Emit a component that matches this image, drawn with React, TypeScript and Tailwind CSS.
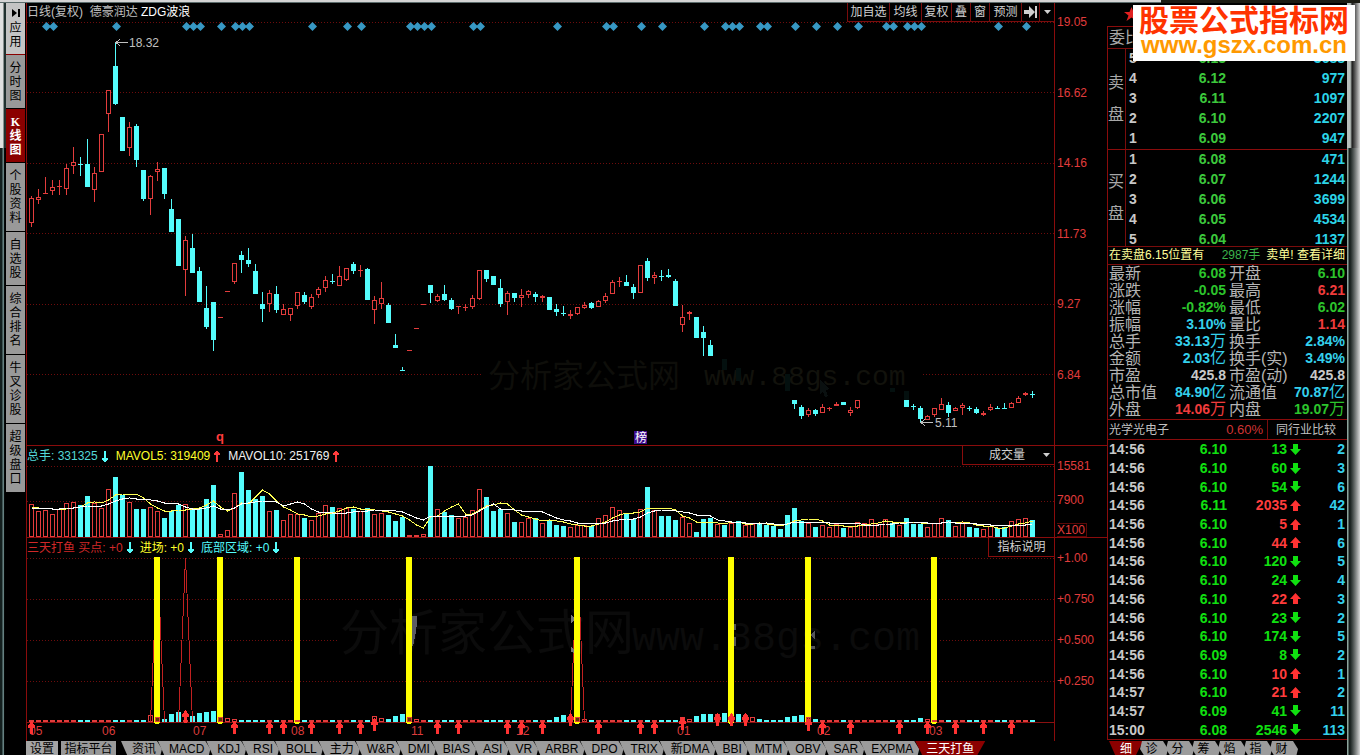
import React from "react"

// kind (r = up, c = down, f = filled red), high, body top, body bottom, low, volume top
type Bar = [string, number, number, number, number, number]

const BARS: Bar[] = [
  ["r", 196, 198, 223, 227, 504], ["r", 189, 197, 200, 204, 511], ["r", 177, 193, 193, 193, 510],
  ["r", 180, 187, 191, 195, 514], ["r", 180, 186, 186, 195, 509], ["r", 164, 168, 189, 195, 503],
  ["r", 147, 162, 166, 174, 502], ["c", 157, 164, 164, 176, 505], ["c", 139, 164, 187, 187, 496],
  ["r", 167, 173, 190, 202, 503], ["r", 134, 134, 172, 172, 508], ["r", 90, 90, 114, 132, 489],
  ["c", 42, 66, 104, 105, 477], ["c", 117, 117, 151, 151, 495], ["r", 122, 127, 148, 156, 502],
  ["c", 124, 126, 160, 167, 509], ["c", 170, 170, 199, 201, 509], ["r", 175, 176, 199, 215, 507],
  ["r", 162, 169, 172, 181, 511], ["c", 168, 168, 194, 199, 518], ["c", 199, 209, 232, 232, 511],
  ["c", 219, 219, 266, 266, 505], ["r", 236, 240, 270, 296, 504], ["c", 234, 248, 273, 273, 509],
  ["c", 267, 271, 302, 302, 509], ["c", 286, 308, 327, 329, 499], ["c", 302, 302, 340, 351, 485],
  ["r", 317, 317, 317, 317, 534], ["r", 291, 291, 291, 291, 530], ["r", 263, 263, 282, 284, 493],
  ["c", 251, 255, 260, 273, 472], ["c", 248, 260, 264, 267, 490], ["c", 264, 271, 294, 294, 499],
  ["c", 292, 304, 309, 322, 496], ["r", 290, 293, 304, 312, 511], ["c", 286, 294, 310, 313, 510],
  ["r", 304, 309, 315, 315, 520], ["r", 308, 308, 315, 321, 514], ["r", 292, 292, 306, 309, 514],
  ["c", 292, 295, 302, 304, 518], ["r", 294, 297, 307, 309, 520], ["r", 287, 289, 295, 298, 513],
  ["r", 276, 280, 288, 292, 505], ["c", 274, 281, 281, 284, 507], ["r", 266, 276, 286, 286, 508],
  ["r", 268, 268, 280, 281, 508], ["c", 262, 264, 271, 274, 509], ["r", 265, 270, 270, 277, 511],
  ["c", 268, 269, 300, 300, 508], ["r", 296, 300, 310, 324, 514], ["r", 282, 298, 304, 309, 513],
  ["c", 303, 305, 323, 323, 515], ["c", 334, 345, 348, 348, 521], ["c", 367, 370, 370, 370, 517],
  ["r", 350, 350, 350, 350, 535], ["r", 328, 328, 328, 328, 535], ["r", 304, 304, 304, 304, 534],
  ["c", 285, 285, 293, 303, 466], ["r", 294, 296, 301, 302, 509], ["c", 285, 294, 300, 301, 512],
  ["c", 298, 300, 309, 310, 515], ["r", 306, 306, 306, 314, 518], ["r", 304, 307, 307, 311, 517],
  ["r", 295, 298, 307, 309, 510], ["r", 270, 270, 299, 300, 489], ["c", 270, 270, 279, 282, 497],
  ["c", 276, 276, 285, 285, 511], ["c", 279, 288, 304, 307, 509], ["r", 291, 293, 302, 315, 513],
  ["c", 293, 293, 298, 302, 522], ["r", 289, 295, 298, 307, 522], ["r", 290, 291, 295, 298, 518],
  ["c", 292, 294, 297, 302, 518], ["f", 295, 296, 298, 302, 523], ["c", 297, 297, 310, 310, 520],
  ["c", 304, 309, 312, 316, 525], ["c", 306, 313, 313, 316, 526], ["f", 310, 314, 316, 319, 527],
  ["r", 307, 307, 314, 315, 525], ["r", 302, 305, 308, 309, 525], ["c", 302, 303, 308, 309, 526],
  ["r", 300, 301, 307, 307, 518], ["r", 293, 296, 301, 303, 515], ["r", 280, 282, 294, 294, 507],
  ["r", 277, 281, 281, 287, 510], ["c", 275, 282, 286, 286, 513], ["c", 284, 287, 293, 299, 519],
  ["r", 265, 265, 293, 293, 509], ["c", 258, 261, 278, 281, 487], ["r", 272, 275, 278, 284, 510],
  ["c", 270, 276, 276, 281, 516], ["c", 269, 275, 277, 278, 516], ["c", 279, 281, 306, 306, 520],
  ["r", 305, 317, 325, 332, 517], ["f", 311, 312, 314, 320, 523], ["c", 317, 317, 338, 338, 532],
  ["c", 326, 332, 338, 356, 519], ["c", 340, 345, 356, 356, 518], ["r", 0, 0, 0, 0, 524],
  ["c", 0, 0, 0, 0, 525], ["r", 0, 0, 0, 0, 523], ["c", 0, 0, 0, 0, 521],
  ["r", 0, 0, 0, 0, 525], ["r", 0, 0, 0, 0, 524], ["c", 0, 0, 0, 0, 524],
  ["c", 0, 0, 0, 0, 525], ["c", 0, 0, 0, 0, 526], ["c", 0, 0, 0, 0, 529],
  ["c", 0, 0, 0, 0, 515], ["c", 400, 400, 404, 409, 508], ["c", 405, 407, 416, 419, 521],
  ["r", 408, 410, 415, 417, 523], ["c", 409, 410, 414, 416, 527], ["r", 404, 407, 413, 413, 525],
  ["r", 407, 408, 408, 411, 527], ["f", 402, 404, 406, 406, 524], ["c", 402, 402, 405, 405, 528],
  ["r", 407, 410, 413, 416, 527], ["r", 400, 400, 408, 409, 522], ["r", 0, 0, 0, 0, 523],
  ["r", 0, 0, 0, 0, 519], ["r", 0, 0, 0, 0, 524], ["r", 0, 0, 0, 0, 519],
  ["c", 0, 0, 0, 0, 523], ["r", 0, 0, 0, 0, 525], ["c", 400, 400, 407, 407, 518],
  ["c", 404, 406, 406, 410, 524], ["c", 406, 408, 419, 422, 524], ["r", 415, 416, 420, 420, 527],
  ["r", 408, 408, 415, 417, 523], ["r", 398, 404, 410, 410, 518], ["c", 402, 405, 413, 417, 520],
  ["r", 407, 408, 411, 411, 526], ["r", 403, 405, 408, 415, 522], ["c", 406, 408, 408, 411, 527],
  ["c", 407, 409, 413, 414, 528], ["f", 411, 413, 415, 416, 529], ["r", 404, 407, 410, 411, 526],
  ["c", 406, 408, 408, 408, 528], ["c", 403, 408, 408, 408, 527], ["r", 402, 403, 408, 408, 521],
  ["r", 396, 398, 403, 403, 519], ["f", 392, 393, 395, 396, 518], ["c", 391, 394, 394, 398, 520],
]

const CYAN = "#54fcfc"
const RED = "#e23c3c"
const BASE = 537
const STEP = 7
const LEFT = 29

const barX = (i: number) => LEFT + i * STEP
const midX = (i: number) => barX(i) + 2.5

const FAINT: Bar[] = [
  ["c", 0, 359, 370, 0, 99], ["c", 0, 368, 381, 0, 101], ["c", 0, 374, 391, 0, 108],
  ["c", 0, 388, 392, 0, 123], ["c", 0, 391, 400, 0, 125],
]

const DIAMONDS = [
  2, 3, 12, 22, 23, 24, 27, 29, 30, 31, 40, 45, 47, 54, 55, 56, 57, 63, 64, 75, 82, 83, 87,
  90, 96, 99, 100, 101, 104, 105, 109, 112, 115, 118, 122, 123, 125, 126, 127, 138, 142,
]

const YELLOW = [18, 27, 38, 54, 78, 100, 111, 129]
const SPIKES = [18, 22, 78]

// bar index -> arrow tip
const ARROWS: [number, number][] = [
  [0, 721], [22, 710], [29, 721], [34, 721], [36, 721], [40, 721], [44, 721], [47, 721],
  [49, 718], [58, 721], [61, 721], [68, 721], [70, 721], [73, 721], [77, 713], [81, 721],
  [87, 721], [89, 721], [93, 717], [98, 713], [100, 713], [102, 713], [111, 718], [113, 721],
  [117, 721], [124, 721], [128, 721], [132, 721], [136, 721], [140, 721],
]

const ZONE: Record<number, number> = {
  17: 715, 18: 718, 19: 719, 20: 714, 21: 712, 23: 716, 24: 713, 25: 712, 26: 711, 27: 716,
  28: 718, 29: 719, 49: 716, 50: 718, 51: 719, 52: 716, 53: 714, 54: 717, 55: 719, 75: 717,
  76: 715, 78: 717, 79: 719, 93: 717, 94: 719, 95: 716, 96: 714, 97: 714, 98: 714, 99: 713,
  100: 714, 101: 714, 102: 715, 103: 717, 104: 719, 108: 717, 109: 716, 110: 715, 111: 718,
  112: 719, 127: 718, 128: 719,
}

const MONTHS: [string, number][] = [
  ["05", 29], ["06", 102], ["07", 193], ["08", 291], ["11", 411], ["12", 516], ["01", 677],
  ["02", 817], ["03", 929],
]

const average = (days: number) =>
  BARS.map((_, i) => {
    let sum = 0
    for (let k = 0; k < days; k++) {
      const bar = BARS[i - k]
      sum += bar ? BASE - bar[5] : 29
    }
    return `${midX(i)},${Math.round(BASE - sum / days)}`
  }).join(" ")

const Grid = ({ rows, from = 27, to = 1054 }: { rows: number[]; from?: number; to?: number }) => (
  <>
    {rows.map((y) => (
      <line key={y} x1={from} x2={to} y1={y + 0.5} y2={y + 0.5} stroke="#6e0c0c" strokeDasharray="1 2" />
    ))}
  </>
)

const Candle = ({ bar, i }: { bar: Bar; i: number }) => {
  const [kind, high, top, bottom, low] = bar
  if (!high) return null
  const color = kind === "c" ? CYAN : RED
  const x = barX(i)
  const flat = top === bottom
  return (
    <g>
      {high < top && <rect x={x + 2} y={high} width={1} height={top - high} fill={color} />}
      {low > bottom && <rect x={x + 2} y={bottom} width={1} height={low - bottom} fill={color} />}
      {flat || kind !== "r" ? (
        <rect x={x} y={top} width={5} height={flat ? 1 : bottom - top} fill={color} />
      ) : (
        <rect x={x + 0.5} y={top + 0.5} width={4} height={bottom - top - 1} fill="#000" stroke={color} />
      )}
    </g>
  )
}

const PriceChart = () => (
  <svg viewBox="27 22 1027 423" preserveAspectRatio="none" className="block w-full flex-1 min-h-0" shapeRendering="crispEdges">
    <Grid rows={[22, 92, 163, 233, 304]} />
    <Grid rows={[374]} to={483} />
    <Grid rows={[374]} from={923} />
    <text x="488" y="387" fontSize="32" fill="#0e0e0a" className="font-['Noto_Sans_CJK_SC',sans-serif]">分析家公式网</text>
    <text x="704" y="385" fontSize="28" fill="#12120c" className="font-['Liberation_Mono',monospace]">www.88gs.com</text>
    {FAINT.map((bar) => (
      <rect key={bar[5]} x={barX(bar[5])} y={bar[2]} width={5} height={bar[3] - bar[2]} fill="#04100f" />
    ))}
    <path d="M820 380l10 9-4 1 2 6-3 1-2-6-3 3z" fill="#0a1010" />
    {DIAMONDS.map((i) => (
      <path key={i} d={`M${midX(i) + 1} 22l4.500 4.500l-4.500 4.500l-4.500-4.500z`} fill="#3798c4" shapeRendering="auto" />
    ))}
    {BARS.map((bar, i) => (
      <Candle key={i} bar={bar} i={i} />
    ))}
    <path d="M116 42.500h12M120 39.500l-4 3l4 3" stroke="#c0c0c0" fill="none" />
    <text x="129" y="47" fontSize="12" fill="#c0c0c0">18.32</text>
    <path d="M921 422.500h12M925 419.500l-4 3l4 3" stroke="#c0c0c0" fill="none" />
    <text x="935" y="427" fontSize="12" fill="#c0c0c0">5.11</text>
    <text x="216" y="441" fontSize="13" fontWeight="bold" fill="#ff3c3c">q</text>
    <rect x="634" y="431" width="13" height="13" fill="#3c0c8c" />
    <text x="635" y="442" fontSize="12" fill="#fff">榜</text>
  </svg>
)

const VolumeChart = () => (
  <svg viewBox="27 466 1027 71" preserveAspectRatio="none" className="block w-full flex-1 min-h-0" shapeRendering="crispEdges">
    <Grid rows={[466, 501]} />
    {BARS.map(([kind, , , , , top], i) =>
      kind === "c" ? (
        <rect key={i} x={barX(i)} y={top} width={5} height={BASE - top} fill={CYAN} />
      ) : (
        <rect key={i} x={barX(i) + 0.5} y={top + 0.5} width={4} height={BASE - top - 1} fill="#000" stroke={RED} />
      )
    )}
    <polyline points={average(5)} fill="none" stroke="#ffff54" />
    <polyline points={average(10)} fill="none" stroke="#fff" />
  </svg>
)

const SignalChart = () => (
  <svg viewBox="27 557 1027 184" preserveAspectRatio="none" className="block w-full flex-1 min-h-0" shapeRendering="crispEdges">
    <Grid rows={[558, 599, 681]} />
    <Grid rows={[640]} to={337} />
    <Grid rows={[640]} from={940} />
    <text x="340" y="650" fontSize="49" fill="#0b0b0b" className="font-['Noto_Sans_CJK_SC',sans-serif]">分析家公式网</text>
    <text x="632" y="650" fontSize="40" fill="#0b0b0b" className="font-['Liberation_Mono',monospace]">www.88gs.com</text>
    <line x1="27" x2="1054" y1="722.500" y2="722.500" stroke="#8a1010" />
    {BARS.map(([kind], i) => {
      const top = ZONE[i] ?? 720
      const color = kind === "c" ? CYAN : RED
      return top >= 720 || kind === "c" ? (
        <rect key={i} x={barX(i)} y={top} width={5} height={722 - top} fill={color} />
      ) : (
        <rect key={i} x={barX(i) + 0.5} y={top + 0.5} width={4} height={721 - top} fill="#000" stroke={color} />
      )
    })}
    {SPIKES.map((i) => (
      <polyline key={i} points={`${midX(i) - 7},722 ${midX(i)},558 ${midX(i) + 7},722`} fill="none" stroke="#c02020" />
    ))}
    <path d="M412 616h5v6l-1 10l-3 14h-1z" fill="#5c5c64" />
    <path d="M571 615l3 3v3l-3 2zM571 647l4 3v3l-4-1z" fill="#76767c" />
    <path d="M734 624h2v6h-2zM734 637h2v9h-2zM811 634l4-4v10l-3-3zM811 646h4v3h-4z" fill="#55555a" />
    {YELLOW.map((i) => (
      <path key={i} d={`M${midX(i) - 3.5} 557h6v165l-1 2h-4l-1-2z`} fill="#ffff00" />
    ))}
    {YELLOW.map((i) => (
      <rect key={i} x={barX(i) + 0.5} y={i === 38 || i === 129 ? 720.5 : 717.5} width={4} height={i === 38 || i === 129 ? 1 : 4} fill="#5a3a00" stroke={RED} />
    ))}
    {MONTHS.map(([label, x]) => (
      <text key={label} x={x} y="735" fontSize="12" fill="#dc3c3c">{label}</text>
    ))}
    {ARROWS.map(([i, tip]) => (
      <path key={i} d={`M${midX(i)} ${tip}l3.500 5v2h-2v6h-3v-6h-2v-2z`} fill="#ff3232" />
    ))}
  </svg>
)

const Arrow = ({ up, className }: { up?: boolean; className: string }) => (
  <svg width="6" height="11" viewBox="0 0 6 11" className={`ml-1 shrink-0 ${up ? "rotate-180" : ""} ${className}`} shapeRendering="crispEdges">
    <path d="M2 0h2v7h2v1l-2 3h-2l-2-3v-1h2z" fill="currentColor" />
  </svg>
)

const SIDE_TABS = [
  { label: "分时图", className: "h-[54px] bg-[#999] text-black" },
  { label: "K线图", className: "h-[54px] bg-[#8b0000] text-white font-bold" },
  { label: "个股资料", className: "h-[69px] bg-[#999] text-black" },
  { label: "自选股", className: "h-[54px] bg-[#999] text-black" },
  { label: "综合排名", className: "h-[69px] bg-[#999] text-black" },
  { label: "牛叉诊股", className: "h-[69px] bg-[#999] text-black" },
  { label: "超级盘口", className: "h-[69px] bg-[#999] text-black" },
]

const Sidebar = () => (
  <nav className="w-5 shrink-0 flex flex-col pr-px">
    <button className="h-[52px] flex flex-col items-center justify-center bg-[#c4c4c4] text-black leading-[14px] border-b border-[#8b0000]">
      <svg width="8" height="8" viewBox="0 0 8 8" className="mb-1">
        <path d="M0 0l5 4l-5 4zM6 0h2v8h-2z" />
      </svg>
      <span>应</span>
      <span>用</span>
    </button>
    {SIDE_TABS.map((tab) => (
      <button key={tab.label} className={`flex flex-col items-center justify-center leading-[14px] border-b border-black ${tab.className}`}>
        {tab.label.split("").map((char) => (
          <span key={char} className={char === "K" ? "font-['Liberation_Serif',serif]" : ""}>{char}</span>
        ))}
      </button>
    ))}
  </nav>
)

const TOOLS = [
  { label: "加自选", className: "w-[42px]" },
  { label: "均线", className: "w-8" },
  { label: "复权", className: "w-[30px]" },
  { label: "叠", className: "w-[19px]" },
  { label: "窗", className: "w-[19px]" },
  { label: "预测", className: "w-8" },
]

const Caret = () => (
  <svg width="7" height="4" viewBox="0 0 7 4">
    <path d="M0 0h7l-3.500 4z" fill="#d0d0d0" />
  </svg>
)

const Toolbar = () => (
  <div className="h-[19px] shrink-0 flex items-stretch justify-between">
    <h1 className="text-[#c0c0c0] leading-[19px] whitespace-pre">
      日线(复权)  德豪润达 <span className="text-white">ZDG波浪</span>
    </h1>
    <div className="flex text-[#d0d0d0]">
      {TOOLS.map((tool) => (
        <button key={tool.label} className={`border-l border-b border-[#7a0c0c] leading-[17px] ${tool.className}`}>
          {tool.label}
        </button>
      ))}
      <button aria-label="下一只" className="w-[18px] border-l border-b border-[#7a0c0c] flex items-center justify-center">
        <svg width="13" height="12" viewBox="0 0 13 12">
          <path d="M0 4h5v-4l6 6l-6 6v-4h-5zM11 0h2v12h-2z" fill="#d0d0d0" />
        </svg>
      </button>
      <button aria-label="更多" className="w-[15px] border-l border-b border-[#7a0c0c] flex items-center justify-center">
        <Caret />
      </button>
    </div>
  </div>
)

const AXIS = "w-[53px] shrink-0 flex flex-col border-l border-[#8a0c0c] pl-[2px] text-[#e03c3c] leading-[14px]"

const TABS = [
  "资讯", "MACD", "KDJ", "RSI", "BOLL", "主力", "W&R", "DMI", "BIAS", "ASI", "VR", "ARBR",
  "DPO", "TRIX", "新DMA", "BBI", "MTM", "OBV", "SAR", "EXPMA",
]

const BottomTabs = () => (
  <div className="h-[14px] shrink-0 flex overflow-hidden text-black leading-[15px] whitespace-nowrap">
    <button className="w-8 h-4 bg-[#a4a4a4]">设置</button>
    <button className="w-[55px] h-4 ml-[3px] bg-[#999]">指标平台</button>
    <div className="flex ml-[5px]">
      {TABS.map((tab) => (
        <button
          key={tab}
          className="h-4 pl-[11px] pr-2 -mr-[6px] bg-[#9c9c9c] [clip-path:polygon(0_0,calc(100%-7px)_0,calc(100%-2px)_50%,calc(100%-4px)_100%,7px_100%)]"
        >
          {tab}
        </button>
      ))}
      <button className="w-[70px] h-4 bg-[#8b0000] text-white [clip-path:polygon(0_0,100%_0,calc(100%-9px)_100%,8px_100%)]">
        三天打鱼
      </button>
    </div>
  </div>
)

const Charts = () => (
  <main className="flex-1 min-w-0 flex flex-col">
    <section className="flex-1 min-h-0 flex border-b border-[#8a0c0c]">
      <div className="flex-1 min-w-0 flex flex-col border-l border-[#8a0c0c]">
        <Toolbar />
        <PriceChart />
      </div>
      <div className={`${AXIS} pt-3 pb-[7px]`}>
        {["19.05", "16.62", "14.16", "11.73", "9.27", "6.84"].map((price) => (
          <span key={price} className="flex-1">{price}</span>
        ))}
      </div>
    </section>
    <section className="h-[92px] shrink-0 flex border-b border-[#8a0c0c]">
      <div className="flex-1 min-w-0 flex flex-col border-l border-[#8a0c0c]">
        <header className="h-5 shrink-0 flex justify-between">
          <div className="flex items-center whitespace-nowrap">
            <span className="text-[#54d8d8]">总手: 331325</span>
            <Arrow className="text-[#54fcfc]" />
            <span className="text-[#ffff2a] ml-2">MAVOL5: 319409</span>
            <Arrow up className="text-[#ff3c3c]" />
            <span className="text-[#f0f0f0] ml-2">MAVOL10: 251769</span>
            <Arrow up className="text-[#ff3c3c]" />
          </div>
          <label className="w-[92px] h-[19px] flex items-center border-l border-b border-[#8a0c0c] pr-1">
            <select aria-label="副图指标" className="flex-1 min-w-0 appearance-none bg-transparent pl-[26px] text-[#d0d0d0] leading-4">
              <option>成交量</option>
            </select>
            <Caret />
          </label>
        </header>
        <VolumeChart />
      </div>
      <div className={`${AXIS} pt-[13px]`}>
        <span className="h-[35px]">15581</span>
        <span className="h-[30px]">7900</span>
        <span className="w-[30px] leading-3 border border-l-0 border-[#5a0808]">X100</span>
      </div>
    </section>
    <section className="h-[203px] shrink-0 flex">
      <div className="flex-1 min-w-0 flex flex-col border-l border-[#8a0c0c]">
        <header className="h-[19px] shrink-0 flex justify-between">
          <div className="flex items-center whitespace-nowrap">
            <span className="text-[#d02828]">三天打鱼 买点: +0</span>
            <Arrow className="text-[#54fcfc]" />
            <span className="text-[#ffff2a] ml-[7px]">进场: +0</span>
            <Arrow className="text-[#54fcfc]" />
            <span className="text-[#54fcfc] ml-[7px]">底部区域: +0</span>
            <Arrow className="text-[#54fcfc]" />
          </div>
          <button className="w-[66px] h-[19px] border-l border-b border-[#8a0c0c] text-[#d0d0d0]">指标说明</button>
        </header>
        <SignalChart />
      </div>
      <div className={`${AXIS} pt-[13px]`}>
        {["+1.00", "+0.750", "+0.500", "+0.250"].map((level) => (
          <span key={level} className="h-[41px]">{level}</span>
        ))}
      </div>
    </section>
    <BottomTabs />
  </main>
)

const ASKS = [["5", "6.13", "3688"], ["4", "6.12", "977"], ["3", "6.11", "1097"], ["2", "6.10", "2207"], ["1", "6.09", "947"]]
const BIDS = [["1", "6.08", "471"], ["2", "6.07", "1244"], ["3", "6.06", "3699"], ["4", "6.05", "4534"], ["5", "6.04", "1137"]]

const Book = ({ side, rows, className }: { side: string; rows: string[][]; className: string }) => (
  <div className={`shrink-0 flex ${className}`}>
    <div className="w-[18px] border-r border-[#7a0c0c] flex flex-col justify-center text-base leading-8 text-[#a8a8a8]">
      {side.split("").map((char) => (
        <span key={char}>{char}</span>
      ))}
    </div>
    <table className="flex-1 self-start text-sm leading-[18px] font-bold">
      <tbody>
        {rows.map(([level, price, volume]) => (
          <tr key={level} className="h-5 align-top">
            <td className="w-[30px] pl-[3px] text-[#c8c8c8]">{level}</td>
            <td className="w-[70px] text-right text-[#3cc83c]">{price}</td>
            <td className="text-right text-[#2cd4e8] pr-[2px]">{volume}</td>
          </tr>
        ))}
      </tbody>
    </table>
  </div>
)

const GREEN = "text-[#2cc42c]"
const BLUE = "text-[#34d0ec]"
const HOT = "text-[#f03c3c]"
const PLAIN = "text-[#c8c8c8]"

const STATS = [
  ["最新", "6.08", GREEN, "开盘", "6.10", GREEN],
  ["涨跌", "-0.05", GREEN, "最高", "6.21", HOT],
  ["涨幅", "-0.82%", GREEN, "最低", "6.02", GREEN],
  ["振幅", "3.10%", BLUE, "量比", "1.14", HOT],
  ["总手", "33.13万", BLUE, "换手", "2.84%", BLUE],
  ["金额", "2.03亿", BLUE, "换手(实)", "3.49%", BLUE],
  ["市盈", "425.8", PLAIN, "市盈(动)", "425.8", PLAIN],
  ["总市值", "84.90亿", BLUE, "流通值", "70.87亿", BLUE],
  ["外盘", "14.06万", HOT, "内盘", "19.07万", GREEN],
]

const Value = ({ text }: { text: string }) => {
  const unit = text.match(/[万亿]$/)?.[0]
  return (
    <>
      {unit ? text.slice(0, -1) : text}
      {unit && <span className="font-normal text-base leading-none">{unit}</span>}
    </>
  )
}

const TICKS = [
  ["14:56", "6.10", "13", "down", "2"], ["14:56", "6.10", "60", "down", "3"],
  ["14:56", "6.10", "54", "down", "6"], ["14:56", "6.11", "2035", "up", "42"],
  ["14:56", "6.10", "5", "up", "1"], ["14:56", "6.10", "44", "up", "6"],
  ["14:56", "6.10", "120", "down", "5"], ["14:56", "6.10", "24", "down", "4"],
  ["14:56", "6.10", "22", "up", "3"], ["14:56", "6.10", "23", "down", "2"],
  ["14:56", "6.10", "174", "down", "5"], ["14:56", "6.09", "8", "down", "2"],
  ["14:56", "6.10", "10", "up", "1"], ["14:57", "6.10", "21", "up", "2"],
  ["14:57", "6.09", "41", "down", "11"], ["15:00", "6.08", "2546", "down", "113"],
]

const QuotePanel = () => (
  <aside className="w-[240px] shrink-0 flex flex-col">
    <div className="h-[23px] shrink-0 pl-[17px] pt-1">
      <svg width="15" height="14" viewBox="0 0 15 14">
        <path d="M7.500 0l2 5h5.500l-4.500 3.500l2 5.500l-5-3.500l-5 3.500l2-5.500l-4.500-3.500h5.500z" fill="#e02020" />
      </svg>
    </div>
    <div className="flex-1 min-h-0 flex flex-col border-l border-t border-[#8a0c0c]">
      <div className="h-[22px] shrink-0 border-b border-[#7a0c0c] pl-px text-base leading-[22px] text-[#a8a8a8]">委比</div>
      <Book side="卖盘" rows={ASKS} className="h-[100px]" />
      <Book side="买盘" rows={BIDS} className="h-[97px] border-t border-[#8a0c0c]" />
      <div className="h-[19px] shrink-0 flex justify-between border-y border-[#7a0c0c] pl-px pr-[2px] leading-[17px] text-[#ffff9a] whitespace-nowrap">
        <span>在卖盘6.15位置有</span>
        <span className="flex gap-[6px]">
          <span className="text-[#3cb44c]">2987手</span>
          <span>卖单! 查看详细</span>
        </span>
      </div>
      <dl className="shrink-0 grid grid-cols-[117px_1fr] gap-x-[3px] pl-px pr-[2px] pb-px text-base leading-[17px] text-[#b4b4b4] border-b border-[#8a0c0c]">
        {STATS.map(([a, x, xColor, b, y, yColor]) => (
          <React.Fragment key={a}>
            <div className="flex justify-between h-[17px] whitespace-nowrap">
              <dt>{a}</dt>
              <dd className={`text-sm leading-[17px] font-bold ${xColor}`}><Value text={x} /></dd>
            </div>
            <div className="flex justify-between h-[17px] whitespace-nowrap">
              <dt>{b}</dt>
              <dd className={`text-sm leading-[17px] font-bold ${yColor}`}><Value text={y} /></dd>
            </div>
          </React.Fragment>
        ))}
      </dl>
      <div className="h-5 shrink-0 flex border-b border-[#8a0c0c] leading-[20px] text-[#c0c0c0]">
        <a href="#industry" className="flex-1 pl-px">光学光电子</a>
        <span className="pr-1 text-[13px] text-[#d03434]">0.60%</span>
        <a href="#compare" className="w-20 border-l border-[#7a0c0c] pl-2">同行业比较</a>
      </div>
      <div className="flex-1 min-h-0 border-b border-[#8a0c0c]">
        <table className="w-full h-full text-sm leading-4 font-bold">
          <tbody>
            {TICKS.map(([time, price, volume, dir, count], i) => (
              <tr key={i}>
                <td className="w-[50px] pl-px text-[#c8c8c8]">{time}</td>
                <td className="w-[69px] text-right text-[#10e010]">{price}</td>
                <td className={`w-[60px] text-right ${dir === "up" ? "text-[#ff3c3c]" : "text-[#10e010]"}`}>{volume}</td>
                <td className="pl-[3px]">
                  <svg width="11" height="11" viewBox="0 0 11 11" className={dir === "up" ? "rotate-180" : ""}>
                    <path d="M3 0h5v5h3l-5.500 6l-5.500-6h3z" fill={dir === "up" ? "#ff3232" : "#10e010"} />
                  </svg>
                </td>
                <td className="text-right pr-[2px] text-[#34d0ec]">{count}</td>
              </tr>
            ))}
          </tbody>
        </table>
      </div>
    </div>
    <div className="h-[15px] shrink-0 pt-px pl-[2px] flex overflow-hidden text-black leading-[16px]">
      <button className="w-[34px] h-4 -mr-1 bg-[#8b0000] text-white [clip-path:polygon(0_0,100%_0,calc(100%-8px)_100%,7px_100%)]">细</button>
      {["诊", "分", "筹", "焰", "指", "财"].map((tab) => (
        <button
          key={tab}
          className="w-[31px] h-4 -mr-[5px] pr-[6px] bg-[#9c9c9c] [clip-path:polygon(3px_0,calc(100%-7px)_0,calc(100%-2px)_50%,calc(100%-4px)_100%,6px_100%,1px_50%)]"
        >
          {tab}
        </button>
      ))}
    </div>
  </aside>
)

const SiteBanner = () => (
  <a
    href="#home"
    className="absolute right-[5px] top-[5px] w-[222px] h-14 pt-[2px] bg-white flex flex-col items-center font-bold whitespace-nowrap"
  >
    <span className="text-[30px] leading-7 text-[#ff3300]">股票公式指标网</span>
    <span className="text-2xl leading-5 text-[#ff9900]">www.gszx.com.cn</span>
  </a>
)

const App = () => {
  return (
    <div className="relative h-screen flex flex-col overflow-hidden bg-black text-xs font-['Liberation_Sans','Noto_Sans_CJK_SC',sans-serif]">
      <div className="h-[3px] shrink-0 flex">
        <div className="flex-1 bg-[#d4d4d4] border-b border-[#5c6c6c]" />
        <div className="w-[199px] bg-[#1c1c14]" />
      </div>
      <div className="flex-1 min-h-0 flex">
        <div className="w-[6px] shrink-0 flex flex-col">
          <div className="h-[145px] bg-linear-to-r from-[#e0e0e0] from-50% to-[#20302e] to-70%" />
          <div className="flex-1 bg-linear-to-r from-[#14201f] from-30% via-[#7c9c9c] via-55% to-black to-80%" />
        </div>
        <Sidebar />
        <Charts />
        <QuotePanel />
        <div className="w-[13px] shrink-0 flex flex-col">
          <div className="h-[145px] bg-linear-to-r from-[#b8c0bc] from-25% via-[#202020] via-40% to-[#d8d8d8]" />
          <div className="flex-1 bg-linear-to-r from-[#8ca49c] from-5% via-[#101816] via-20% to-[#d8d8d8]" />
        </div>
      </div>
      <SiteBanner />
    </div>
  )
}

export default App
